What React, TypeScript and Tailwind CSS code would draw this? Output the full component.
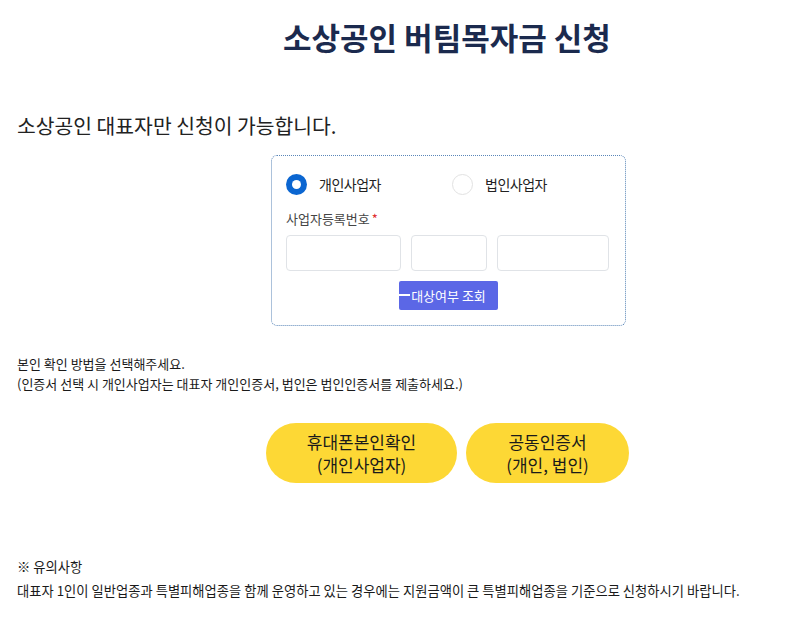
import React from "react";

const font = { fontFamily: '"Noto Sans CJK KR", "Noto Sans", sans-serif' };

function Radio({ checked, label }: { checked?: boolean; label: string }) {
  return (
    <label className="flex items-center gap-[12px] text-[14px] tracking-[-0.5px] text-[#222]">
      {checked ? (
        <span className="w-[21px] h-[21px] rounded-full bg-[#0b66d1] flex items-center justify-center">
          <span className="w-[9px] h-[9px] rounded-full bg-white" />
        </span>
      ) : (
        <span className="w-[21px] h-[21px] rounded-full border border-[#e2e2e2] bg-white" />
      )}
      {label}
    </label>
  );
}

export default function App() {
  return (
    <div style={font} className="w-[799px] h-[617px] bg-white text-[#222] relative overflow-hidden">
      <h1 className="pt-[17px] pl-[283px] text-[31px] font-bold leading-[40px] text-[#1b2a4e]">
        소상공인 버팀목자금 신청
      </h1>

      <p className="mt-[55px] pl-[17px] text-[20.4px] leading-[26px] text-[#222]">
        소상공인 대표자만 신청이 가능합니다.
      </p>

      <div className="ml-[271px] mt-[17px] w-[355px] h-[171px] rounded-[6px] border border-dotted border-[#5a86b8] px-[14px] pt-[18px]">
        <div className="flex">
          <div className="w-[166px]">
            <Radio checked label="개인사업자" />
          </div>
          <Radio label="법인사업자" />
        </div>
        <div className="mt-[15px] text-[13px] leading-[18px] text-[#444]">
          사업자등록번호<span className="text-[#e03131] ml-[2px]">*</span>
        </div>
        <div className="mt-[7px] flex gap-[10px]">
          <input className="w-[115px] h-[36px] rounded-[4px] border border-[#e0e3e7] outline-none" />
          <input className="w-[76px] h-[36px] rounded-[4px] border border-[#e0e3e7] outline-none" />
          <input className="w-[112px] h-[36px] rounded-[4px] border border-[#e0e3e7] outline-none" />
        </div>
        <div className="mt-[10px] flex justify-center">
          <button className="relative h-[29px] px-[12px] rounded-[2px] bg-[#5b67e6] text-white text-[13px] leading-[29px]">
            <span className="absolute left-0 top-[13px] w-[11px] h-[2px] bg-white" />
            대상여부 조회
          </button>
        </div>
      </div>

      <div className="mt-[28px] pl-[17px] text-[13px] leading-[20px] text-[#1a1a1a]">
        <p>본인 확인 방법을 선택해주세요.</p>
        <p>(인증서 선택 시 개인사업자는 대표자 개인인증서, 법인은 법인인증서를 제출하세요.)</p>
      </div>

      <div className="mt-[29px] flex gap-[9px] pl-[266px]">
        <button className="w-[191px] h-[60px] rounded-full bg-[#fdd835] text-[17px] leading-[23px] text-[#1a1a1a]">
          휴대폰본인확인
          <br />
          (개인사업자)
        </button>
        <button className="w-[163px] h-[60px] rounded-full bg-[#fdd835] text-[17px] leading-[23px] text-[#1a1a1a]">
          공동인증서
          <br />
          (개인, 법인)
        </button>
      </div>

      <div className="mt-[72px] pl-[17px] text-[13.3px] leading-[24px] text-[#1a1a1a]">
        <p>※ 유의사항</p>
        <p>대표자 1인이 일반업종과 특별피해업종을 함께 운영하고 있는 경우에는 지원금액이 큰 특별피해업종을 기준으로 신청하시기 바랍니다.</p>
      </div>
    </div>
  );
}
